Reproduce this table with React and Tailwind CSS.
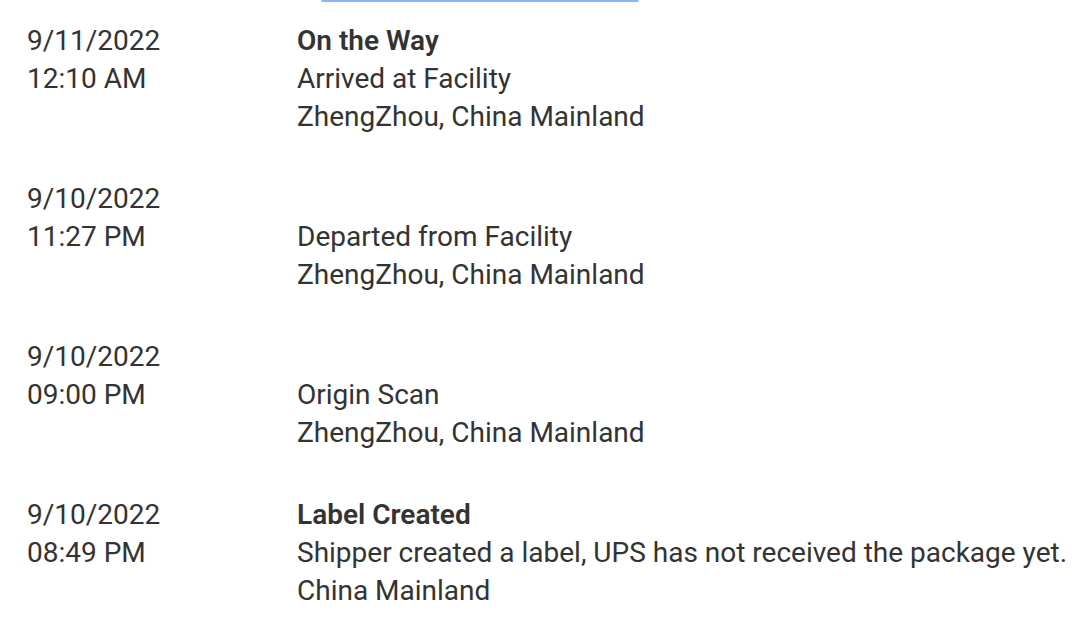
import React from 'react';

const events = [
  {
    date: '9/11/2022',
    time: '12:10 AM',
    status: 'On the Way',
    detail: 'Arrived at Facility',
    place: 'ZhengZhou, China Mainland',
  },
  {
    date: '9/10/2022',
    time: '11:27 PM',
    status: '',
    detail: 'Departed from Facility',
    place: 'ZhengZhou, China Mainland',
  },
  {
    date: '9/10/2022',
    time: '09:00 PM',
    status: '',
    detail: 'Origin Scan',
    place: 'ZhengZhou, China Mainland',
  },
  {
    date: '9/10/2022',
    time: '08:49 PM',
    status: 'Label Created',
    detail: 'Shipper created a label, UPS has not received the package yet.',
    place: 'China Mainland',
  },
];

const App = () => {
  return (
    <div className="min-h-screen bg-white text-[#333333] font-['Roboto',sans-serif] text-[28px] leading-[38px]">
      {/* bouton coupé en haut */}
      <div className="ml-[321px] w-[318px] h-[2px] bg-[#8ab4f8] rounded-b-full" />

      <div className="flex flex-col gap-[44px] pt-[20px] pl-[27px]">
        {events.map((ev, index) => (
          <div key={index} className="flex">
            <div className="w-[270px] shrink-0">
              <div>{ev.date}</div>
              <div>{ev.time}</div>
            </div>
            <div>
              <div className="font-semibold h-[38px]">{ev.status}</div>
              <div className="whitespace-nowrap">{ev.detail}</div>
              <div>{ev.place}</div>
            </div>
          </div>
        ))}
      </div>
    </div>
  );
};

export default App;
